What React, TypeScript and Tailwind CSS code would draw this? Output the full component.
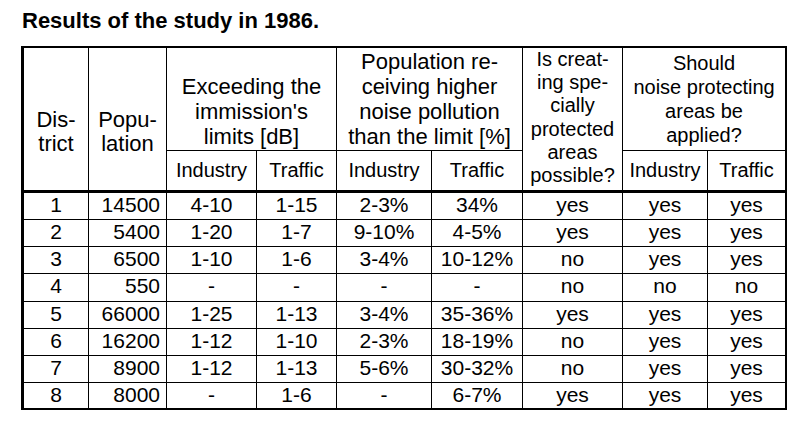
const rows = [
  ["1", "14500", "4-10", "1-15", "2-3%", "34%", "yes", "yes", "yes"],
  ["2", "5400", "1-20", "1-7", "9-10%", "4-5%", "yes", "yes", "yes"],
  ["3", "6500", "1-10", "1-6", "3-4%", "10-12%", "no", "yes", "yes"],
  ["4", "550", "-", "-", "-", "-", "no", "no", "no"],
  ["5", "66000", "1-25", "1-13", "3-4%", "35-36%", "yes", "yes", "yes"],
  ["6", "16200", "1-12", "1-10", "2-3%", "18-19%", "no", "yes", "yes"],
  ["7", "8900", "1-12", "1-13", "5-6%", "30-32%", "no", "yes", "yes"],
  ["8", "8000", "-", "1-6", "-", "6-7%", "yes", "yes", "yes"],
];

export default function App() {
  return (
    <div className="min-h-screen bg-white pl-[21px] pt-[10px] text-black font-['Liberation_Sans',Arial,sans-serif]">
      <h1 className="pl-px text-[22px] font-bold leading-[22px]">Results of the study in 1986.</h1>

      <table className="mt-[14px] w-[766px] table-fixed border-separate border-spacing-0 border-[2px] border-l-[3px] border-black">
        <colgroup>
          <col className="w-[65px]" />
          <col className="w-[78px]" />
          <col className="w-[90px]" />
          <col className="w-[80px]" />
          <col className="w-[95px]" />
          <col className="w-[91px]" />
          <col className="w-[100px]" />
          <col className="w-[85px]" />
          <col className="w-[77px]" />
        </colgroup>
        <thead>
          <tr className="h-[103px]">
            <th rowSpan={2} className="border-r border-b-[3px] border-black p-0 pt-[60px] align-top text-[22px] font-normal leading-[24px]">
              Dis-
              <br />
              trict
            </th>
            <th rowSpan={2} className="border-r border-b-[3px] border-black p-0 pt-[60px] align-top text-[22px] font-normal leading-[24px]">
              Popu-
              <br />
              lation
            </th>
            <th colSpan={2} className="border-r border-b border-black p-0 pb-px align-bottom text-[22px] font-normal leading-[25px]">
              Exceeding the
              <br />
              immission's
              <br />
              limits [dB]
            </th>
            <th colSpan={2} className="border-r border-b border-black p-0 pb-px align-bottom text-[22px] font-normal leading-[25px]">
              Population re-
              <br />
              ceiving higher
              <br />
              noise pollution
              <br />
              than the limit [%]
            </th>
            <th rowSpan={2} className="border-r border-b-[3px] border-black p-0 align-top text-[20px] font-normal leading-[23.2px]">
              Is creat-
              <br />
              ing spe-
              <br />
              cially
              <br />
              protected
              <br />
              areas
              <br />
              possible?
            </th>
            <th colSpan={2} className="border-b border-black p-0 pb-[3px] align-bottom text-[20px] font-normal leading-[24px]">
              Should
              <br />
              noise protecting
              <br />
              areas be
              <br />
              applied?
            </th>
          </tr>
          <tr className="h-[42px]">
            {["Industry", "Traffic", "Industry", "Traffic", "Industry", "Traffic"].map((label, i) => (
              <th
                key={i}
                className={`border-b-[3px] border-black p-0 align-middle text-[20px] font-normal leading-[25px] ${i === 5 ? "" : "border-r"}`}
              >
                {label}
              </th>
            ))}
          </tr>
        </thead>
        <tbody>
          {rows.map((row, r) => (
            <tr key={r} className={r === 3 ? "h-[28px]" : r === 7 ? "h-[25px]" : "h-[27px]"}>
              {row.map((cell, c) => (
                <td
                  key={c}
                  className={`border-black p-0 align-top text-[21px] leading-[24px] ${
                    c === 1 ? "pr-[6px] text-right" : "text-center"
                  } ${c === 8 ? "" : "border-r"} ${r === 7 ? "" : "border-b"}`}
                >
                  {cell}
                </td>
              ))}
            </tr>
          ))}
        </tbody>
      </table>
    </div>
  );
}
